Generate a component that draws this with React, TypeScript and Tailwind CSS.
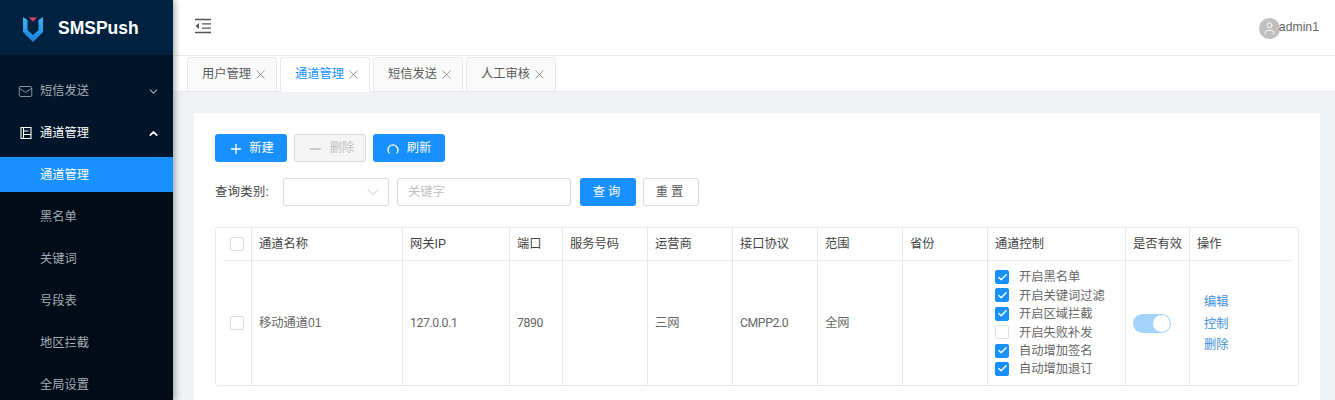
import { Check, ChevronDown, ChevronUp, Mail, Minus, Plus, User, X } from "lucide-react"

const font = "font-['Liberation_Sans','Noto_Sans_CJK_SC',sans-serif]"
const latin = "font-['Roboto','Noto_Sans_CJK_SC',sans-serif] tracking-[-0.4px]"

const subMenu = ["通道管理", "黑名单", "关键词", "号段表", "地区拦截", "全局设置"]
const tabs = ["用户管理", "通道管理", "短信发送", "人工审核"]
const columns = ["通道名称", "网关IP", "端口", "服务号码", "运营商", "接口协议", "范围", "省份", "通道控制", "是否有效", "操作"]
const controls = [
  { label: "开启黑名单", on: true },
  { label: "开启关键词过滤", on: true },
  { label: "开启区域拦截", on: true },
  { label: "开启失败补发", on: false },
  { label: "自动增加签名", on: true },
  { label: "自动增加退订", on: true },
]
const gridCols = "grid grid-cols-[29px_151px_107px_53px_85px_85px_85px_85px_85px_138px_64px_100px]"

function Logo() {
  return (
    <svg width="24" height="28" viewBox="0 0 24 28">
      <defs>
        <linearGradient id="logoBlue" x1="0" y1="0" x2="0" y2="1">
          <stop offset="0" stopColor="#3fb4f5" />
          <stop offset="1" stopColor="#1a7fd8" />
        </linearGradient>
      </defs>
      <path d="M2 2 L6.5 5 V15 L12 20 L17.5 15 V5 L22 2 V17 L12 27 L2 17 Z" fill="url(#logoBlue)" />
      <path d="M8 2.5 H16 L12 6.5 Z" fill="#e2475d" />
    </svg>
  )
}

function Sidebar() {
  return (
    <aside className="w-[173px] shrink-0 h-full bg-[#000c17] shadow-[2px_0_6px_rgba(0,21,41,0.35)] z-10 flex flex-col">
      <div className="h-[55px] shrink-0 bg-[#002140] flex items-center pl-[21px] pt-[2px] gap-[13px]">
        <Logo />
        <span className="text-white font-bold text-[17.5px]">SMSPush</span>
      </div>
      <div className="bg-[#001529] pt-[15px] pb-[3px]">
        <div className="h-[42px] flex items-center pl-[18px] pr-[13px] text-[#a6adb4]">
          <Mail size={15} strokeWidth={1.3} />
          <span className="ml-[7px] text-[12.25px]">短信发送</span>
          <ChevronDown size={13} strokeWidth={2} className="ml-auto" />
        </div>
        <div className="h-[42px] flex items-center pl-[19px] pr-[13px] text-white">
          <svg width="14" height="14" viewBox="0 0 14 14" fill="none" stroke="currentColor" strokeWidth="1.1">
            <path d="M2 1.5 H12 V12.5 H2 Z M4.5 1.5 V12.5 M4.5 5 H9.5 M4.5 8.5 H12" />
          </svg>
          <span className="ml-[7px] text-[12.25px]">通道管理</span>
          <ChevronUp size={13} strokeWidth={3} className="ml-auto" />
        </div>
      </div>
      <div className="bg-[#000c17] flex flex-col gap-[7px]">
        {subMenu.map((m, i) => (
          <div
            key={m}
            className={`h-[35px] shrink-0 flex items-center pl-[40px] pt-px text-[12.25px] ${i === 0 ? "bg-[#1890ff] text-white" : "text-[#a6adb4]"}`}
          >
            {m}
          </div>
        ))}
      </div>
    </aside>
  )
}

function TopBar() {
  return (
    <header className="h-[56px] shrink-0 bg-white border-b border-[#e8e8e8] flex items-center justify-between pl-[21px] pr-[16px]">
      <svg width="18" height="16" viewBox="0 0 18 16" className="mb-[3px]" fill="none" stroke="#555" strokeWidth="1.3">
        <path d="M1 1.5 H17 M8 5.8 H17 M8 10.2 H17 M1 14.5 H17" />
        <path d="M5 5 L1.5 8 L5 11 Z" fill="#555" stroke="none" />
      </svg>
      <div className="flex items-center mt-[2px]">
        <div className="w-[21px] h-[21px] -mr-px rounded-full bg-[#bfbfbf] flex items-center justify-center text-white">
          <User size={15} strokeWidth={1.5} />
        </div>
        <span className="text-[12.25px] text-[#666] -mt-[3px]">admin1</span>
      </div>
    </header>
  )
}

function TabBar() {
  return (
    <div className="h-[36px] shrink-0 bg-white border-b border-[#e8e8e8] flex items-end gap-[3px] pl-[14px]">
      {tabs.map((t, i) => (
        <div
          key={t}
          className={`h-[35px] -mb-px pl-[14px] pr-[8px] flex items-center gap-[2px] rounded-t-[3px] border border-[#e8e8e8] text-[12.25px] ${i === 1 ? "bg-white border-b-white text-[#1890ff]" : "bg-[#fafafa] text-[#595959]"}`}
        >
          {t}
          <X size={15} strokeWidth={1.3} className="text-[#888]" />
        </div>
      ))}
    </div>
  )
}

function Toolbar() {
  return (
    <div className="flex gap-[7px] text-[12.25px]">
      <button className="h-[28px] w-[72px] pt-px rounded-[3px] bg-[#1890ff] text-white flex items-center justify-center gap-[5px]">
        <Plus size={16} strokeWidth={2} />
        新建
      </button>
      <button className="h-[28px] w-[72px] pt-px rounded-[3px] bg-[#f5f5f5] border border-[#d9d9d9] text-[#bfbfbf] flex items-center justify-center gap-[6px]">
        <Minus size={18} strokeWidth={1.8} />
        删除
      </button>
      <button className="h-[28px] w-[72px] pt-px rounded-[3px] bg-[#1890ff] text-white flex items-center justify-center gap-[8px]">
        <svg width="12" height="12" viewBox="0 0 12 12" fill="none" stroke="currentColor" strokeWidth="1.3">
          <path d="M2.4 10.4 A5 5 0 1 1 9.6 10.4" />
        </svg>
        刷新
      </button>
    </div>
  )
}

function SearchRow() {
  return (
    <div className="flex items-center mt-[16px] text-[12.25px]">
      <span className="w-[68px] text-[#444] tracking-[0.4px]">查询类别:</span>
      <div className="w-[106px] h-[28px] rounded-[3px] border border-[#d9d9d9] bg-white flex items-center justify-end pr-[5px]">
        <ChevronDown size={20} strokeWidth={1} className="text-[#bbb]" />
      </div>
      <div className="w-[174px] h-[28px] ml-[8px] rounded-[3px] border border-[#d9d9d9] bg-white flex items-center pl-[10px] text-[#bfbfbf]">
        关键字
      </div>
      <button className="w-[56px] h-[28px] ml-[9px] rounded-[3px] bg-[#1890ff] text-white tracking-[3px]">查询</button>
      <button className="w-[56px] h-[28px] ml-[7px] rounded-[3px] bg-white border border-[#d9d9d9] text-[#595959] tracking-[3px]">重置</button>
    </div>
  )
}

function Box({ on }: { on: boolean }) {
  return (
    <span className={`w-[14px] h-[14px] rounded-[2px] flex items-center justify-center shrink-0 border ${on ? "bg-[#1890ff] border-[#1890ff] text-white" : "bg-white border-[#e0e0e0]"}`}>
      {on && <Check size={11} strokeWidth={3} />}
    </span>
  )
}

function DataTable() {
  const divider = "border-r border-[#e8e8e8]"
  return (
    <div className="mt-[21px] h-[159px] border border-[#e8e8e8] rounded-[3px] px-[7px] text-[12.25px] shadow-[0_1px_2px_rgba(0,0,0,0.03)]">
      <div className={`${gridCols} h-[33px] border-b border-[#e8e8e8] text-[#444]`}>
        <div className={`${divider} flex items-center pl-[7px]`}>
          <span className="w-[14px] h-[14px] rounded-[2px] border border-[#d9d9d9]" />
        </div>
        {columns.map((c, i) => (
          <div key={c} className={`${i < columns.length - 1 ? divider : ""} flex items-center pl-[7px] pt-px`}>
            {c}
          </div>
        ))}
      </div>
      <div className={`${gridCols} h-[124px] text-[#666]`}>
        <div className={`${divider} flex items-center pl-[7px]`}>
          <span className="w-[14px] h-[14px] rounded-[2px] border border-[#d9d9d9]" />
        </div>
        <div className={`${divider} flex items-center pl-[7px] pt-px`}>移动通道01</div>
        <div className={`${divider} flex items-center pl-[7px] pt-px ${latin}`}>127.0.0.1</div>
        <div className={`${divider} flex items-center pl-[7px] pt-px ${latin}`}>7890</div>
        <div className={divider} />
        <div className={`${divider} flex items-center pl-[7px] pt-px`}>三网</div>
        <div className={`${divider} flex items-center pl-[7px] pt-px ${latin}`}>CMPP2.0</div>
        <div className={`${divider} flex items-center pl-[7px] pt-px`}>全网</div>
        <div className={divider} />
        <div className={`${divider} flex flex-col justify-center pl-[7px]`}>
          {controls.map((c) => (
            <label key={c.label} className="h-[18.4px] flex items-center gap-[10px]">
              <Box on={c.on} />
              <span className="pt-px">{c.label}</span>
            </label>
          ))}
        </div>
        <div className={`${divider} flex items-center pl-[7px]`}>
          <span className="w-[38px] h-[19px] rounded-full bg-[#a3d3fb] flex items-center justify-end pr-[1px]">
            <span className="w-[17px] h-[17px] rounded-full bg-white" />
          </span>
        </div>
        <div className="flex flex-col justify-center pl-[14px] pt-[2px] gap-[3px] text-[#3f8fdc]">
          <span>编辑</span>
          <span>控制</span>
          <span>删除</span>
        </div>
      </div>
    </div>
  )
}

export default function App() {
  return (
    <div className={`${font} flex h-[400px] w-full overflow-hidden bg-[#f0f2f5]`}>
      <Sidebar />
      <div className="flex-1 min-w-0 flex flex-col">
        <TopBar />
        <TabBar />
        <main className="flex-1 pt-[21px] pl-[21px] pr-[15px] overflow-hidden">
          <div className="bg-white min-h-[320px] pt-[21px] px-[21px]">
            <Toolbar />
            <SearchRow />
            <DataTable />
          </div>
        </main>
      </div>
    </div>
  )
}
